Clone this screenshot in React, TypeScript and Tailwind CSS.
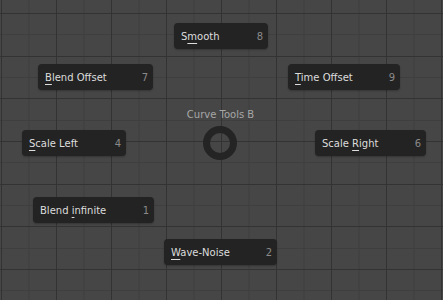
import React from "react";

type Item = { pre: string; u: string; post: string; key: string; left: number; top: number; w: number };

const items: Item[] = [
  { pre: "S", u: "m", post: "ooth", key: "8", left: 174, top: 23, w: 94 },
  { pre: "", u: "B", post: "lend Offset", key: "7", left: 38, top: 64, w: 115 },
  { pre: "", u: "T", post: "ime Offset", key: "9", left: 288, top: 64, w: 112 },
  { pre: "", u: "S", post: "cale Left", key: "4", left: 22, top: 130, w: 104 },
  { pre: "Scale ", u: "R", post: "ight", key: "6", left: 315, top: 130, w: 111 },
  { pre: "Blend ", u: "i", post: "nfinite", key: "1", left: 33, top: 197, w: 121 },
  { pre: "", u: "W", post: "ave-Noise", key: "2", left: 164, top: 239, w: 113 },
];

function Grid() {
  const vMajor = [1.5, 56.5, 111.5, 166.5, 221.5, 276.5, 331.5, 386.5, 441.5];
  const vMinor = vMajor.map((x) => x + 27.5);
  const hMajor = [13.5, 56.5, 98.5, 141.5, 184.5, 226.5, 269.5];
  const hMinor = [34.5, 77.5, 120.5, 162.5, 205.5, 248.5, 290.5];
  return (
    <svg className="absolute inset-0" width="443" height="300" viewBox="0 0 443 300">
      {vMinor.map((x) => (
        <line key={"vm" + x} x1={x} y1={0} x2={x} y2={300} stroke="#3f3f3f" strokeWidth={1} />
      ))}
      {hMinor.map((y) => (
        <line key={"hm" + y} x1={0} y1={y} x2={443} y2={y} stroke="#3f3f3f" strokeWidth={1} />
      ))}
      {vMajor.map((x) => (
        <line key={"vM" + x} x1={x} y1={0} x2={x} y2={300} stroke="#333333" strokeWidth={1} />
      ))}
      {hMajor.map((y) => (
        <line key={"hM" + y} x1={0} y1={y} x2={443} y2={y} stroke="#333333" strokeWidth={1} />
      ))}
    </svg>
  );
}

export default function App() {
  return (
    <div
      className="relative w-[443px] h-[300px] overflow-hidden bg-[#464646] text-[10px]"
      style={{ fontFamily: '"DejaVu Sans", sans-serif' }}
    >
      <Grid />
      <div className="absolute left-0 top-[108px] w-[441px] text-center text-[#a6a6a6] leading-[14px]">
        Curve Tools B
      </div>
      <svg className="absolute left-[203px] top-[126px]" width="34" height="34" viewBox="0 0 34 34">
        <circle cx="17" cy="17" r="13.5" fill="none" stroke="#242424" strokeWidth="7" />
      </svg>
      {items.map((it) => (
        <div
          key={it.key}
          className="absolute h-[26px] flex items-center justify-between rounded-[4px] bg-[#232323] pl-[7px] pr-[5px] shadow-[0_1px_2px_rgba(0,0,0,0.25)]"
          style={{ left: it.left, top: it.top, width: it.w }}
        >
          <span className="text-[#dddddd] whitespace-pre">
            {it.pre}
            <span className="underline underline-offset-[3px] decoration-1">{it.u}</span>
            {it.post}
          </span>
          <span className="text-[#8a8a8a]">{it.key}</span>
        </div>
      ))}
    </div>
  );
}
